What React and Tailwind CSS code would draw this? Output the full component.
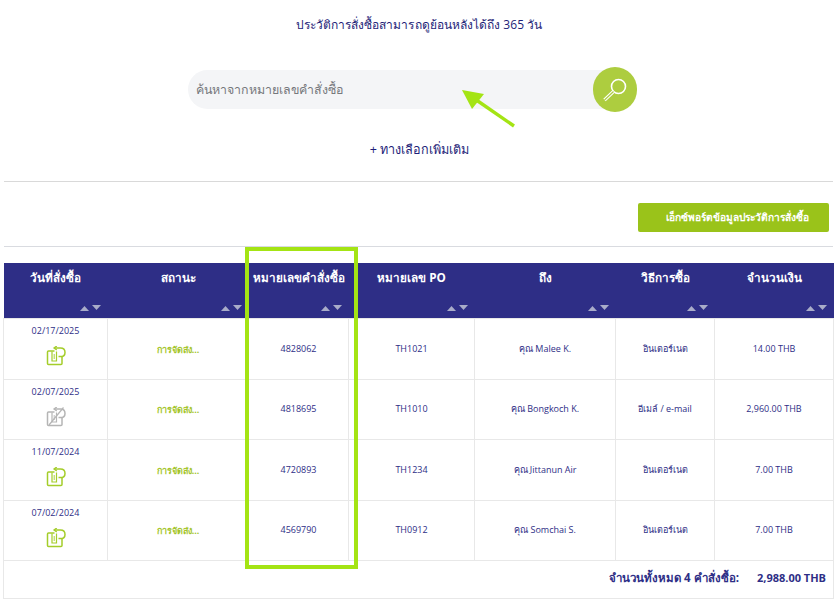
const NAVY = "text-[#2e2e86]";

function SortArrows() {
  return (
    <div className="absolute bottom-[7px] right-[7px] flex gap-[3px]">
      <svg width="9" height="6" viewBox="0 0 9 6"><path d="M4.5 1 L9 6 H0 Z" fill="#a9acc9" /></svg>
      <svg width="9" height="6" viewBox="0 0 9 6"><path d="M0 0 H9 L4.5 5 Z" fill="#a9acc9" /></svg>
    </div>
  );
}

function ReorderIcon({ color }) {
  return (
    <svg width="20" height="20" viewBox="0 0 20 20" fill="none" stroke={color} strokeWidth="1.5" className="mx-auto">
      <path d="M8.5 5 H2.5 Q1.5 5 1.5 6 V17.5 Q1.5 18.5 2.5 18.5 H15 Q16 18.5 16 17.5 V11" />
      <path d="M6 5.5 V15 H10.5 V5.5" strokeWidth="1.2" />
      <path d="M8.2 8 V13" strokeWidth="0.9" />
      <path d="M9 2 H14.5 C17.5 2 19 4 19 6.4 C19 8.8 17.2 10.6 14.5 10.6 H12.5" />
      <path d="M10.8 0 L8 2 L10.8 4" strokeWidth="1.3" />
      {color === "#b5b5b5" && <path d="M3 18 L17.5 0.5" strokeWidth="1.2" />}
    </svg>
  );
}

const rows = [
  ["02/17/2025", "4828062", "TH1021", "คุณ Malee K.", "อินเตอร์เนต", "14.00 THB", "#a4cd2a", "h-[61px]"],
  ["02/07/2025", "4818695", "TH1010", "คุณ Bongkoch K.", "อีเมล์ / e-mail", "2,960.00 THB", "#b5b5b5", "h-[60px]"],
  ["11/07/2024", "4720893", "TH1234", "คุณ Jittanun Air", "อินเตอร์เนต", "7.00 THB", "#a4cd2a", "h-[61px]"],
  ["07/02/2024", "4569790", "TH0912", "คุณ Somchai S.", "อินเตอร์เนต", "7.00 THB", "#a4cd2a", "h-[60px]"],
];

const heads = ["วันที่สั่งซื้อ", "สถานะ", "หมายเลขคำสั่งซื้อ", "หมายเลข PO", "ถึง", "วิธีการซื้อ", "จำนวนเงิน"];
const widths = ["w-[104px]", "w-[141px]", "w-[100px]", "w-[126px]", "w-[141px]", "w-[99px]", "w-[119px]"];

export default function App() {
  return (
    <div className={`relative w-[840px] h-[608px] overflow-hidden bg-white ${NAVY} font-['Open_Sans','Noto_Sans',sans-serif]`}>
      <p className="pt-[16px] pr-[2px] text-center text-[12px] leading-[17px] tracking-[0.05px] text-[#1e1e78]">
        ประวัติการสั่งซื้อสามารถดูย้อนหลังได้ถึง 365 วัน
      </p>

      <div className="mt-[34px] ml-[188px] flex w-[449px] items-center">
        <div className="flex h-[39px] w-[420px] items-center rounded-l-[20px] bg-[#f4f5f7] pl-[8px] pt-[1px] text-[12.4px] text-[#76787c]">
          ค้นหาจากหมายเลขคำสั่งซื้อ
        </div>
        <div className="z-10 -ml-[15px] flex h-[45px] w-[44px] shrink-0 items-center justify-center rounded-full bg-[#adcd3f]">
          <svg width="26" height="26" viewBox="0 0 26 26" fill="none" stroke="#fff">
            <circle cx="16.5" cy="9.5" r="7" strokeWidth="1.6" />
            <path d="M11.5 14.5 L2.5 23" strokeWidth="3.4" />
            <path d="M11.5 14.5 L2.5 23" strokeWidth="1.2" stroke="#adcd3f" />
          </svg>
        </div>
      </div>

      <p className="mt-[29px] text-center text-[12.6px] leading-[17px] text-[#1e1e78] pr-[1px]">+ ทางเลือกเพิ่มเติม</p>

      <div className="mx-[4px] mt-[23px] h-[1px] w-[829px] bg-[#d9d9d9]" />

      <div className="mt-[21px] flex justify-end pr-[11px]">
        <button className="flex h-[29px] w-[191px] items-center justify-center rounded-[2px] bg-[#9ac31a] pl-[7px] text-[10.2px] font-bold text-white">
          เอ็กซ์พอร์ตข้อมูลประวัติการสั่งซื้อ
        </button>
      </div>

      <div className="mx-[4px] mt-[14px] h-[1px] w-[829px] bg-[#d9dbe0]" />

      <table className="mt-[16px] ml-[3px] w-[830px] table-fixed border-collapse">
        <thead>
          <tr className="h-[55px] bg-[#2e2e86] text-white">
            {heads.map((h, i) => (
              <th key={h} className={`${widths[i]} relative p-0 pb-[25px] text-center align-middle text-[11.7px] font-bold`}>
                {h}
                <SortArrows />
              </th>
            ))}
          </tr>
        </thead>
        <tbody className="text-[9px]">
          {rows.map((r) => (
            <tr key={r[1]} className={r[7]}>
              <td className="border border-[#e8e8e8] p-0 text-center align-top">
                <div className="mt-[6px] leading-[12px]">{r[0]}</div>
                <div className="mt-[9px]"><ReorderIcon color={r[6]} /></div>
              </td>
              <td className="border border-[#e8e8e8] p-0 pt-[2px] text-center text-[9px] font-bold text-[#a4c52c]">การจัดส่ง...</td>
              <td className="border border-[#e8e8e8] p-0 text-center">{r[1]}</td>
              <td className="border border-[#e8e8e8] p-0 text-center">{r[2]}</td>
              <td className="border border-[#e8e8e8] p-0 text-center">{r[3]}</td>
              <td className="border border-[#e8e8e8] p-0 text-center">{r[4]}</td>
              <td className="border border-[#e8e8e8] p-0 text-center">{r[5]}</td>
            </tr>
          ))}
          <tr className="h-[38px]">
            <td colSpan={7} className="border border-[#e8e8e8] p-0 pb-[2px] pr-[7px] text-right">
              <span className="text-[11.5px] font-bold">จำนวนทั้งหมด 4 คำสั่งซื้อ:</span>
              <span className="ml-[18px] text-[11px] font-bold">2,988.00 THB</span>
            </td>
          </tr>
        </tbody>
      </table>

      {/* annotation overlays */}
      <div className="pointer-events-none absolute left-[245px] top-[247px] h-[322px] w-[113px] border-4 border-[#a4e414]" />
      <svg className="pointer-events-none absolute left-[455px] top-[85px]" width="70" height="50" viewBox="0 0 70 50">
        <path d="M59 41 L17 12" stroke="#a4e414" strokeWidth="3.4" />
        <path d="M7 5 L29 9 L17 24 Z" fill="#a4e414" />
      </svg>
    </div>
  );
}
